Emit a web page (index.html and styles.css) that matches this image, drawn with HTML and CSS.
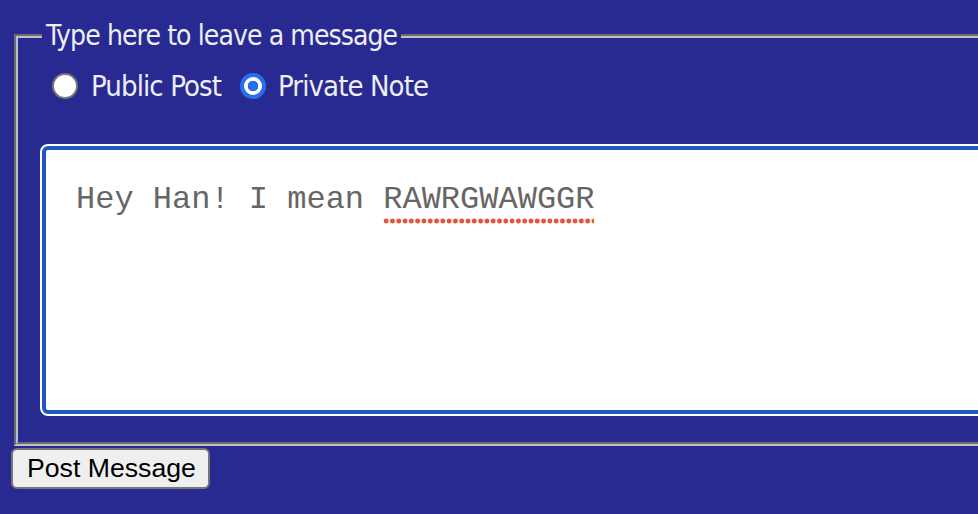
FILE: index.html
```html
<!DOCTYPE html>
<html lang="en">
<head>
<meta charset="utf-8">
<title>Leave a message</title>
<link rel="stylesheet" href="styles.css">
</head>
<body>
<form class="message-form">
  <fieldset class="message-box">
    <legend class="message-legend">Type here to leave a message</legend>
    <div class="visibility">
      <label class="choice"><input class="radio" type="radio" name="visibility" value="public"><span class="choice-text">Public Post</span></label>
      <label class="choice"><input class="radio" type="radio" name="visibility" value="private" checked><span class="choice-text">Private Note</span></label>
    </div>
    <div class="message-input" role="textbox" aria-multiline="true">Hey Han! I mean <span class="misspelled">RAWRGWAWGGR</span></div>
  </fieldset>
  <button class="post-button" type="button">Post Message</button>
</form>
</body>
</html>
```
FILE: styles.css
```css
html {
  overflow: hidden;
  background: #282a92;
}

body {
  margin: 0;
  background: #282a92;
}

.message-form {
  padding: 18px 0 0 11px;
  width: 1200px;
}

.message-box {
  margin: 0 0 2px 3px;
  padding: 14px 24px 28px 24px;
  border: 4px groove #c0c0c0;
  min-width: 0;
}

.message-legend {
  padding: 0 4px;
  font-family: "DejaVu Sans Condensed", "Roboto", sans-serif;
  font-size: 28px;
  letter-spacing: -0.9px;
  line-height: 36px;
  color: #ededf2;
}

.visibility {
  display: flex;
  align-items: center;
  height: 36px;
}

.choice {
  display: flex;
  align-items: center;
  font-family: "DejaVu Sans Condensed", "Roboto", sans-serif;
  font-size: 29px;
  letter-spacing: -0.9px;
  line-height: 36px;
  color: #ededf2;
}

.radio {
  appearance: none;
  -webkit-appearance: none;
  width: 26px;
  height: 26px;
  margin: 0 13px 0 10px;
  border-radius: 50%;
  border: 2px solid #767676;
  background: #ffffff;
  box-sizing: border-box;
}

.radio:checked {
  border: 4px solid #2a6ef0;
  background: radial-gradient(circle, #2a6ef0 0 5px, #ffffff 5.6px);
}

.choice + .choice .radio {
  margin: 0 12px 0 19px;
}

.message-input {
  margin-top: 42px;
  width: 1000px;
  height: 268px;
  box-sizing: border-box;
  padding: 32px 30px;
  border: 4px solid #1f57c3;
  border-radius: 6px;
  box-shadow: 0 0 0 2px #ffffff;
  background: #ffffff;
  font-family: "Liberation Mono", "Courier New", monospace;
  font-size: 32px;
  line-height: 36px;
  color: #666666;
  white-space: pre-wrap;
}

.misspelled {
  padding-bottom: 6px;
  background-image: radial-gradient(circle, #e5533d 0 2.2px, transparent 2.8px);
  background-size: 6.3px 6px;
  background-repeat: repeat-x;
  background-position: 0 100%;
}

.post-button {
  display: block;
  height: 41px;
  margin: 0;
  padding: 0 12px 0 14px;
  border: 2px solid #767676;
  border-radius: 6px;
  background: #efefef;
  font-family: "Liberation Sans", Arial, sans-serif;
  font-size: 26.67px;
  color: #000000;
}
```
